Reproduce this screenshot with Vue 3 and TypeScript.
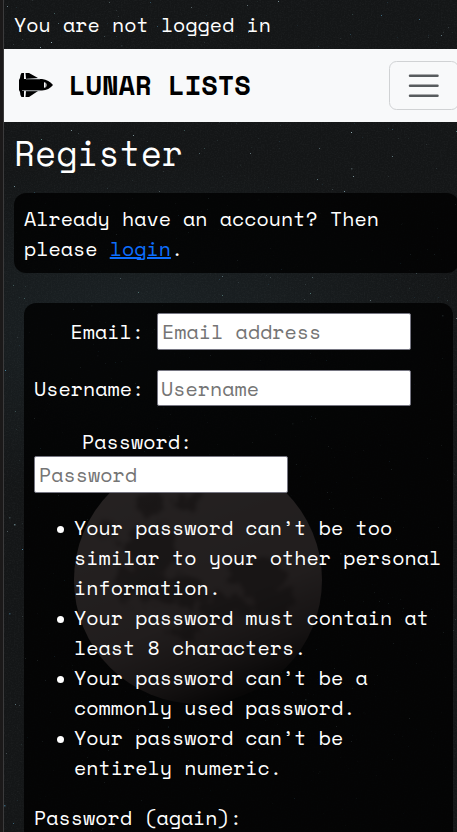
<script setup lang="ts">
interface Star { x: number; y: number; s: number; o: number; c: string }

function makeRandom(seed: number): () => number {
  let state = seed
  return () => {
    state = (state * 1664525 + 1013904223) % 4294967296
    return state / 4294967296
  }
}

const random = makeRandom(4711)
const tints: string[] = ['#4f8fae', '#7fa0a8', '#5f8a88', '#9db6bd']
const stars: Star[] = Array.from({ length: 750 }, () => ({
  x: Math.floor(random() * 457),
  y: Math.floor(random() * 832),
  s: random() > 0.96 ? 1.5 : 1,
  o: 0.15 + Math.pow(random(), 3) * 0.8,
  c: tints[Math.floor(random() * tints.length)],
}))

const rules: string[] = [
  'Your password can’t be too similar to your other personal information.',
  'Your password must contain at least 8 characters.',
  'Your password can’t be a commonly used password.',
  'Your password can’t be entirely numeric.',
]
</script>

<template>
  <div class="page">
    <svg class="sky" width="457" height="832" viewBox="0 0 457 832" aria-hidden="true">
      <defs>
        <linearGradient id="moonShade" x1="0.3" y1="0.05" x2="0.68" y2="1">
          <stop offset="0" stop-color="#baa8a8" />
          <stop offset="0.6" stop-color="#a59292" />
          <stop offset="0.82" stop-color="#6c5e5e" />
          <stop offset="1" stop-color="#181515" />
        </linearGradient>
        <radialGradient id="haze">
          <stop offset="0" stop-color="#1b2225" />
          <stop offset="1" stop-color="#1b2225" stop-opacity="0" />
        </radialGradient>
        <filter id="soft" x="-20%" y="-20%" width="140%" height="140%">
          <feTurbulence type="fractalNoise" baseFrequency="0.07" numOctaves="4" seed="8" result="n" />
          <feDisplacementMap in="SourceGraphic" in2="n" scale="30" xChannelSelector="R" yChannelSelector="G" />
          <feGaussianBlur stdDeviation="2.2" />
        </filter>
        <filter id="grain" x="0" y="0" width="100%" height="100%">
          <feTurbulence type="fractalNoise" baseFrequency="0.7" numOctaves="2" seed="3" />
          <feColorMatrix values="0 0 0 0 .6  0 0 0 0 .65  0 0 0 0 .68  .5 .5 0 0 -.43" />
        </filter>
        <clipPath id="disc"><circle cx="198" cy="580" r="124" /></clipPath>
      </defs>
      <rect width="457" height="832" fill="#141617" />
      <ellipse cx="140" cy="330" rx="330" ry="170" fill="url(#haze)" />
      <rect width="457" height="832" filter="url(#grain)" opacity="0.13" />
      <rect
        v-for="(star, i) in stars" :key="i"
        :x="star.x" :y="star.y" :width="star.s" :height="star.s" :fill="star.c" :opacity="star.o"
      />
      <circle cx="198" cy="580" r="124" fill="url(#moonShade)" />
      <g clip-path="url(#disc)">
        <g filter="url(#soft)" fill="#4c4141" opacity="0.5">
          <ellipse cx="152" cy="503" rx="20" ry="13" />
          <ellipse cx="190" cy="503" rx="11" ry="7" />
          <ellipse cx="109" cy="530" rx="10" ry="12" />
          <ellipse cx="154" cy="547" rx="27" ry="20" />
          <ellipse cx="141" cy="582" rx="26" ry="20" />
          <ellipse cx="183" cy="592" rx="27" ry="15" />
          <ellipse cx="257" cy="576" rx="28" ry="17" />
          <ellipse cx="273" cy="600" rx="24" ry="16" />
          <ellipse cx="226" cy="608" rx="24" ry="13" />
          <ellipse cx="188" cy="630" rx="14" ry="8" />
        </g>
      </g>
    </svg>

    <div class="edge"></div>
    <div class="content">
      <p class="status">You are not logged in</p>
      <nav class="navbar">
        <a class="brand">
          <svg class="rocket" width="36" height="26" viewBox="0 0 36 26" aria-hidden="true">
            <path d="M3.5 1H6V7H4V19H6V25H3.5Q2 23 2 20L1 18V8L2 6Q2 3 3.5 1ZM7.5 1H11L20 6L8 7ZM4 7H24Q31 8 35 13Q31 18 24 18.5H4ZM8 19L20 19L11 25H7.5Z" fill="#000" />
            <path d="M8 7.1H22M6 18.9H22" stroke="#a5acb0" stroke-width=".6" />
            <path d="M26 10.2Q28.8 10.6 28.8 13Q28.8 15.4 26 15.8Z" fill="#f8f9fa" />
            <path d="M28 10.5V15.5" stroke="#000" stroke-width=".6" />
          </svg>
          <span class="name">LUNAR LISTS</span>
        </a>
        <button class="toggler" type="button" aria-label="Menu">
          <svg width="37.5" height="37.5" viewBox="0 0 30 30">
            <path d="M4 7h22M4 15h22M4 23h22" stroke="rgba(33,37,41,.75)" stroke-width="2" stroke-linecap="round" />
          </svg>
        </button>
      </nav>
      <main>
        <h1>Register</h1>
        <p class="notice">Already have an account? Then<br>please <a class="link" href="#">login</a>.</p>
        <form class="form">
          <div class="row first">
            <label for="email">Email:</label>
            <input id="email" class="inset" type="email" placeholder="Email address">
          </div>
          <div class="row second">
            <label for="username">Username:</label>
            <input id="username" type="text" placeholder="Username">
          </div>
          <div class="stack">
            <label for="password">Password:</label>
            <input id="password" class="inset" type="password" placeholder="Password">
          </div>
          <ul>
            <li v-for="rule in rules" :key="rule">{{ rule }}</li>
          </ul>
          <label class="again">Password (again):</label>
        </form>
      </main>
    </div>
  </div>
</template>

<style>
body { margin: 0; background: #141617; overflow: hidden; }
</style>

<style scoped>
* { box-sizing: border-box; }
.page {
  position: relative;
  display: flex;
  width: 457px;
  height: 832px;
  overflow: hidden;
  color: #fff;
  font: 20px/30px "Space Mono", "Liberation Mono", monospace;
}
.sky { position: absolute; inset: 0; }
.edge { position: relative; flex: 0 0 4px; height: 832px; background: #1b1919; border-right: 1px solid #3b3b3c; }
.content { position: relative; flex: 0 0 465px; }
.status { margin: 0; padding: 10px 10px 9px; height: 49px; }
.navbar {
  display: flex;
  align-items: center;
  justify-content: space-between;
  height: 73px;
  padding: 0 10px 0 14px;
  background: #f8f9fa;
}
.brand { display: flex; align-items: center; gap: 15px; color: #000; font-size: 27px; font-weight: 700; }
.name { padding-bottom: 2px; }
.rocket { display: block; margin-bottom: 1px; }
.toggler {
  display: flex;
  align-items: center;
  justify-content: center;
  width: 70px;
  height: 49px;
  padding: 0;
  border: 1px solid #d0d2d4;
  border-radius: 7.5px;
  background: transparent;
}
main { padding: 10px 10px 0; }
h1 { margin: 0 0 20px; font-size: 34.5px; line-height: 41px; font-weight: 400; }
.notice { margin: 0; padding: 11px 10px 9px; width: 445px; height: 80px; border-radius: 12px; background: rgba(0, 0, 0, .8); }
.link { color: #0d6efd; text-decoration: underline; }
.form {
  width: 429px;
  height: 560px;
  margin: 30px 0 0 10px;
  padding: 10px 10px 0;
  border-radius: 12px;
  background: rgba(0, 0, 0, .8);
}
.row { display: flex; align-items: center; gap: 13px; height: 37px; }
.row label { width: 110px; text-align: right; white-space: nowrap; }
.second { margin-top: 20px; height: 36px; }
.second label { padding-top: 1px; }
.second input { height: 36px; }
.stack { display: flex; flex-direction: column; margin-top: 21px; }
.stack label { height: 29px; margin-left: 48px; }
input {
  width: 254px;
  height: 37px;
  padding: 1px 3px;
  border: 1px solid #767682;
  border-radius: 2px;
  background: #fff;
  font: inherit;
}
.inset { padding-left: 4px; }
input::placeholder { color: #757575; opacity: 1; }
ul { margin: 20px 0; padding-left: 23px; list-style: none; }
li { display: flex; gap: 10px; }
li::before {
  content: "";
  flex: 0 0 7px;
  height: 7px;
  margin-top: 12.5px;
  border-radius: 50%;
  background: #fff;
}
.again { display: block; white-space: nowrap; }
</style>
